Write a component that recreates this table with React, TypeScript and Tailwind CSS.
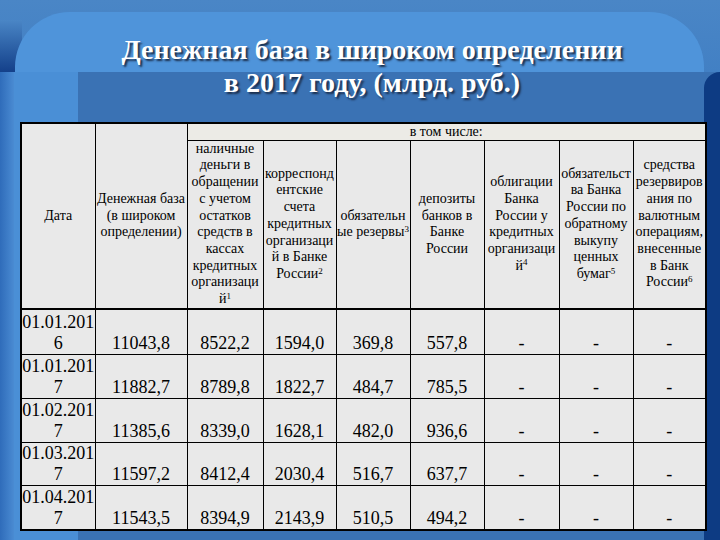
import React from 'react'

const serif = { fontFamily: '"Liberation Serif", "Times New Roman", serif' }

type Row = { date: [string, string]; values: string[] }

const rows: Row[] = [
  { date: ['01.01.201', '6'], values: ['11043,8', '8522,2', '1594,0', '369,8', '557,8', '-', '-', '-'] },
  { date: ['01.01.201', '7'], values: ['11882,7', '8789,8', '1822,7', '484,7', '785,5', '-', '-', '-'] },
  { date: ['01.02.201', '7'], values: ['11385,6', '8339,0', '1628,1', '482,0', '936,6', '-', '-', '-'] },
  { date: ['01.03.201', '7'], values: ['11597,2', '8412,4', '2030,4', '516,7', '637,7', '-', '-', '-'] },
  { date: ['01.04.201', '7'], values: ['11543,5', '8394,9', '2143,9', '510,5', '494,2', '-', '-', '-'] },
]

const rowHeights = ['h-[45px]', 'h-[44px]', 'h-[44px]', 'h-[43px]', 'h-[45px]']

// header columns under "в том числе:", each line as in the slide
const subHeaders: { lines: string[]; sup?: string }[] = [
  { lines: ['наличные', 'деньги в', 'обращении', 'с учетом', 'остатков', 'средств в', 'кассах', 'кредитных', 'организаци', 'й'], sup: '1' },
  { lines: ['корреспонд', 'ентские', 'счета', 'кредитных', 'организаци', 'й в Банке', 'России'], sup: '2' },
  { lines: ['обязательн', 'ые резервы'], sup: '3' },
  { lines: ['депозиты', 'банков в', 'Банке', 'России'] },
  { lines: ['облигации', 'Банка', 'России у', 'кредитных', 'организаци', 'й'], sup: '4' },
  { lines: ['обязательст', 'ва Банка', 'России по', 'обратному', 'выкупу', 'ценных', 'бумаг'], sup: '5' },
  { lines: ['средства', 'резервиров', 'ания по', 'валютным', 'операциям,', 'внесенные', 'в Банк', 'России'], sup: '6' },
]

function HeaderLines({ lines, sup }: { lines: string[]; sup?: string }) {
  return (
    <>
      {lines.map((l, i) => (
        <div key={i} className="whitespace-nowrap">
          {l}
          {sup && i === lines.length - 1 && <sup className="text-[9px]">{sup}</sup>}
        </div>
      ))}
    </>
  )
}

export default function App() {
  return (
    <div className="relative w-[720px] h-[540px] overflow-hidden bg-[#3a72b4]">
      {/* slide template background */}
      <div className="absolute inset-x-0 top-0 h-[72px] bg-gradient-to-b from-[#4a86c6] to-[#4280c4]" />
      <div className="absolute left-0 top-[20px] w-[22px] h-[52px] bg-gradient-to-b from-[#4a86c6] to-[#14408a]" />
      <div className="absolute left-[15px] top-[12px] right-[16px] h-[60px] rounded-t-[55px] bg-[#4f94da]" />
      <div className="absolute left-0 top-[72px] bottom-0 w-[14px] bg-gradient-to-r from-[#2f6cba] to-[#4a8bd2]" />
      <div className="absolute left-[14px] top-[72px] bottom-0 w-[64px] bg-[#4a8fd6]" />
      <div className="absolute right-0 top-[72px] bottom-0 w-[16px] rounded-tl-[18px] bg-[#0d3b83]" />

      <div className="relative flex flex-col">
        {/* Title */}
        <div
          className="h-[122px] pt-[33px] pl-[24px] flex flex-col items-center text-white font-bold text-[28px] leading-[33px] [text-shadow:2px_2px_2px_#1b2d4a]"
          style={serif}
        >
          <div>Денежная база в широком определении</div>
          <div>в 2017 году, (млрд. руб.)</div>
        </div>

        {/* Table */}
        <div className="ml-[20px] w-[685px]" style={serif}>
          <table className="w-full table-fixed border-collapse border-2 border-black bg-[#e9e9e9] text-black">
            <colgroup>
              <col className="w-[74px]" />
              <col className="w-[92px]" />
              <col className="w-[76px]" />
              <col className="w-[73px]" />
              <col className="w-[74px]" />
              <col className="w-[74px]" />
              <col className="w-[75px]" />
              <col className="w-[74px]" />
              <col className="w-[73px]" />
            </colgroup>
            <thead className="text-[14px] leading-[16.7px]">
              <tr className="h-[17px]">
                <td rowSpan={2} className="border border-black text-center align-middle p-0">
                  Дата
                </td>
                <td rowSpan={2} className="border border-black text-center align-middle p-0">
                  <div>Денежная база</div>
                  <div>(в широком</div>
                  <div>определении)</div>
                </td>
                <td colSpan={7} className="border border-black text-center p-0 leading-[15px] bg-[#ecebe6]">
                  в том числе:
                </td>
              </tr>
              <tr className="h-[169px] border-b-2 border-black">
                {subHeaders.map((h, i) => (
                  <td key={i} className="border border-black border-b-2 text-center align-middle p-0">
                    <HeaderLines lines={h.lines} sup={h.sup} />
                  </td>
                ))}
              </tr>
            </thead>
            <tbody className="text-[18px] leading-[21px]">
              {rows.map((r, i) => (
                <tr key={i} className={rowHeights[i]}>
                  <td className="border border-black text-center align-bottom p-0">
                    <div>{r.date[0]}</div>
                    <div>{r.date[1]}</div>
                  </td>
                  {r.values.map((v, j) => (
                    <td key={j} className="border border-black text-center align-bottom p-0">
                      {v}
                    </td>
                  ))}
                </tr>
              ))}
            </tbody>
          </table>
        </div>
      </div>
    </div>
  )
}
